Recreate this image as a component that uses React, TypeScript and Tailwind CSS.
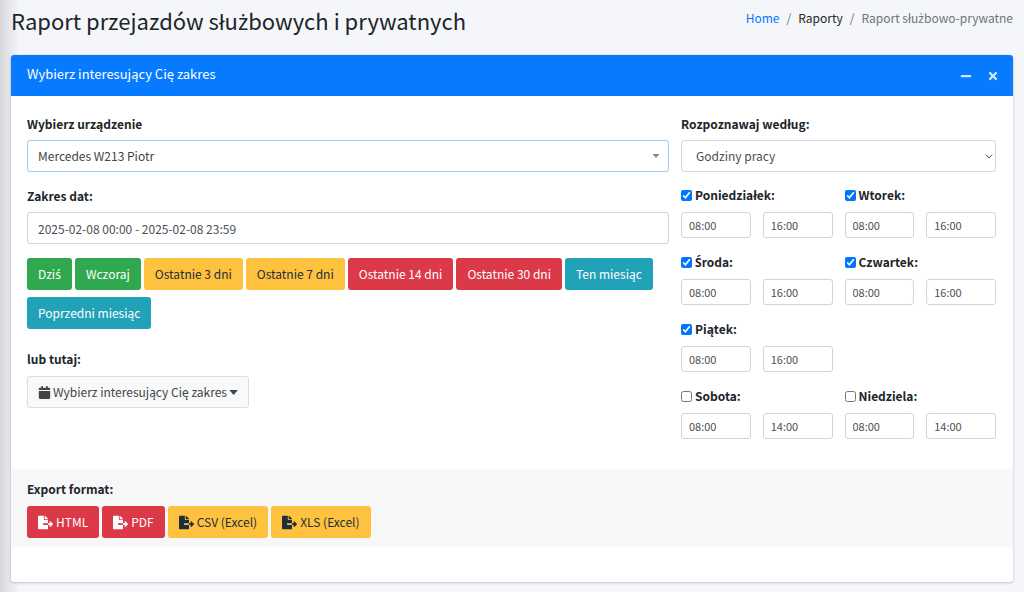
import { useState } from "react";
import { clsx } from "clsx";
import {
    FaCalendar,
    FaFileExport,
    FaMinus,
    FaTimes,
} from "react-icons/fa";

type Tone = "success" | "warning" | "danger" | "info";

interface WorkDay {
    id: string;
    name: string;
    enabled: boolean;
    from: string;
    to: string;
    fullRow?: boolean;
}

const TONES: Record<Tone, string> = {
    success: "bg-[#2fa84f] text-white",
    warning: "bg-[#fec23e] text-[#1f2d3d]",
    danger: "bg-[#db3848] text-white",
    info: "bg-[#22a2b8] text-white",
};

const RANGES: { label: string; tone: Tone }[] = [
    { label: "Dziś", tone: "success" },
    { label: "Wczoraj", tone: "success" },
    { label: "Ostatnie 3 dni", tone: "warning" },
    { label: "Ostatnie 7 dni", tone: "warning" },
    { label: "Ostatnie 14 dni", tone: "danger" },
    { label: "Ostatnie 30 dni", tone: "danger" },
    { label: "Ten miesiąc", tone: "info" },
    { label: "Poprzedni miesiąc", tone: "info" },
];

const EXPORTS: { label: string; tone: Tone }[] = [
    { label: "HTML", tone: "danger" },
    { label: "PDF", tone: "danger" },
    { label: "CSV (Excel)", tone: "warning" },
    { label: "XLS (Excel)", tone: "warning" },
];

const WEEK: WorkDay[] = [
    { id: "mon", name: "Poniedziałek", enabled: true, from: "08:00", to: "16:00" },
    { id: "tue", name: "Wtorek", enabled: true, from: "08:00", to: "16:00" },
    { id: "wed", name: "Środa", enabled: true, from: "08:00", to: "16:00" },
    { id: "thu", name: "Czwartek", enabled: true, from: "08:00", to: "16:00" },
    { id: "fri", name: "Piątek", enabled: true, from: "08:00", to: "16:00", fullRow: true },
    { id: "sat", name: "Sobota", enabled: false, from: "08:00", to: "14:00" },
    { id: "sun", name: "Niedziela", enabled: false, from: "08:00", to: "14:00" },
];

const BUTTON =
    "flex h-8 items-center gap-[3px] rounded-[3px] px-[11px] whitespace-nowrap";
const FIELD =
    "block h-8 w-full rounded-[3px] border border-[#ced4da] bg-white px-[10px] text-[#495057]";
const TIME_FIELD =
    "block h-[26px] w-full min-w-0 rounded-[3px] border border-[#ced4da] bg-white px-[7px] text-[11px] text-[#495057]";

// the base font has no ż, ś or Ś, so those letters come from Noto Sans
const Polish = ({ text }: { text: string }) => (
    <span>
        {text.split(/([żśŚ])/).map((part, index) =>
            index % 2 === 1 ? (
                <span key={index} className="font-['Noto_Sans',sans-serif]">
                    {part}
                </span>
            ) : (
                part
            ),
        )}
    </span>
);

const DayHours = ({ day }: { day: WorkDay }) => {
    const [enabled, setEnabled] = useState(day.enabled);

    return (
        <div className={clsx(day.fullRow && "col-span-2")}>
            <div className="flex h-5 items-center gap-[3px]">
                <input
                    id={day.id}
                    type="checkbox"
                    checked={enabled}
                    onChange={(e) => setEnabled(e.target.checked)}
                    className="size-[11px] accent-[#0075ff]"
                />
                <label htmlFor={day.id} className="font-bold">
                    <Polish text={`${day.name}:`} />
                </label>
            </div>
            <div
                className={clsx(
                    "mt-[7px] grid gap-3",
                    day.fullRow ? "grid-cols-4" : "grid-cols-2",
                )}
            >
                <input
                    type="text"
                    aria-label={`${day.name} od`}
                    defaultValue={day.from}
                    className={TIME_FIELD}
                />
                <input
                    type="text"
                    aria-label={`${day.name} do`}
                    defaultValue={day.to}
                    className={TIME_FIELD}
                />
            </div>
        </div>
    );
};

const App = () => {
    return (
        <div className="relative min-h-screen bg-[#f4f6f9] px-[11px] pb-[10px] font-['Noto_Sans_CJK_SC','Noto_Sans',sans-serif] text-[12px] leading-5 text-[#212529]">
            {/* shadow cast by the sidebar, the card sits above it */}
            <div className="pointer-events-none absolute inset-y-0 left-0 w-5 bg-linear-to-r from-black/12 to-transparent" />

            <main className="relative">
                <div className="flex h-[55px] items-start justify-between">
                    <h1 className="pt-1 text-[22px] leading-8">
                        <Polish text="Raport przejazdów służbowych i prywatnych" />
                    </h1>
                    <nav aria-label="breadcrumb" className="pt-2">
                        <ol className="flex gap-[7px]">
                            <li>
                                <a href="#" className="text-[#007bff]">
                                    Home
                                </a>
                            </li>
                            <li className="text-[#6c757d]">/</li>
                            <li>Raporty</li>
                            <li className="text-[#6c757d]">/</li>
                            <li className="text-[#6c757d]">
                                <Polish text="Raport służbowo-prywatne" />
                            </li>
                        </ol>
                    </nav>
                </div>

                <section className="rounded-[3px] bg-white pb-[35px] shadow-[0_0_1px_rgba(0,0,0,0.13),0_1px_3px_rgba(0,0,0,0.2)]">
                    <header className="flex h-[41px] items-center justify-between rounded-t-[3px] bg-[#077bff] pr-[14px] pl-4 text-white">
                        <h2 className="pb-[3px] text-[13px]">
                            Wybierz interesujący Cię zakres
                        </h2>
                        <div className="flex gap-[15px] text-white/80">
                            <button type="button" aria-label="Zwiń">
                                <FaMinus size={12} />
                            </button>
                            <button type="button" aria-label="Zamknij">
                                <FaTimes size={12} />
                            </button>
                        </div>
                    </header>

                    <div className="grid grid-cols-3 gap-3 pt-[18px] pr-[17px] pb-[30px] pl-4">
                        <div className="col-span-2">
                            <label htmlFor="device" className="block font-bold">
                                Wybierz urządzenie
                            </label>
                            <div className="relative mt-[6px]">
                                <select
                                    id="device"
                                    className="block h-8 w-full appearance-none rounded-[3px] border border-[#9cc9f7] bg-white px-[10px] text-[#444]"
                                >
                                    <option>Mercedes W213 Piotr</option>
                                </select>
                                <svg
                                    viewBox="0 0 8 4"
                                    className="pointer-events-none absolute top-[14px] right-[9px] h-1 w-2 fill-[#888]"
                                >
                                    <path d="M0.5 0h7L4 4z" />
                                </svg>
                            </div>

                            <label htmlFor="dates" className="mt-[14px] block font-bold">
                                Zakres dat:
                            </label>
                            <input
                                id="dates"
                                type="text"
                                defaultValue="2025-02-08 00:00 - 2025-02-08 23:59"
                                className={clsx(FIELD, "mt-[6px]")}
                            />

                            <div className="mt-[14px] flex flex-wrap gap-x-[3px] gap-y-[7px]">
                                {RANGES.map((range) => (
                                    <button
                                        key={range.label}
                                        type="button"
                                        className={clsx(BUTTON, TONES[range.tone])}
                                    >
                                        <Polish text={range.label} />
                                    </button>
                                ))}
                            </div>

                            <label htmlFor="range-picker" className="mt-5 block font-bold">
                                lub tutaj:
                            </label>
                            <button
                                id="range-picker"
                                type="button"
                                className="mt-[7px] flex h-8 items-center gap-[2px] rounded-[3px] border border-[#ddd] bg-[#f8f9fa] px-[10px] whitespace-nowrap text-[#444]"
                            >
                                <FaCalendar size={13} />
                                Wybierz interesujący Cię zakres
                                <svg viewBox="0 0 9 5" className="h-[5px] w-[9px] fill-current">
                                    <path d="M0.9 0h7.4q0.6 0 0.2 0.5L5 4.5q-0.4 0.4-0.8 0L0.7 0.5Q0.3 0 0.9 0z" />
                                </svg>
                            </button>
                        </div>

                        <div>
                            <label htmlFor="mode" className="block font-bold">
                                Rozpoznawaj według:
                            </label>
                            <div className="relative mt-[6px]">
                                <select
                                    id="mode"
                                    className="block h-8 w-full appearance-none rounded-[3px] border border-[#ced4da] bg-white px-[14px] text-[#495057]"
                                >
                                    <option>Godziny pracy</option>
                                </select>
                                <svg
                                    viewBox="0 0 8 5"
                                    className="pointer-events-none absolute top-[14px] right-[3px] h-[5px] w-2 fill-none stroke-[#444]"
                                >
                                    <path d="M0.8 0.6L4 4L7.2 0.6" strokeWidth="0.9" />
                                </svg>
                            </div>

                            <div className="mt-[13px] grid grid-cols-2 gap-x-3 gap-y-[14px]">
                                {WEEK.map((day) => (
                                    <DayHours key={day.id} day={day} />
                                ))}
                            </div>
                        </div>
                    </div>

                    <div className="bg-[#f7f7f7] px-4 pt-[10px] pb-[9px]">
                        <p className="font-bold">Export format:</p>
                        <div className="mt-[7px] flex flex-wrap gap-[3px]">
                            {EXPORTS.map((item) => (
                                <button
                                    key={item.label}
                                    type="button"
                                    className={clsx(BUTTON, TONES[item.tone])}
                                >
                                    <FaFileExport size={15} />
                                    {item.label}
                                </button>
                            ))}
                        </div>
                    </div>
                </section>
            </main>
        </div>
    );
};

export default App;
